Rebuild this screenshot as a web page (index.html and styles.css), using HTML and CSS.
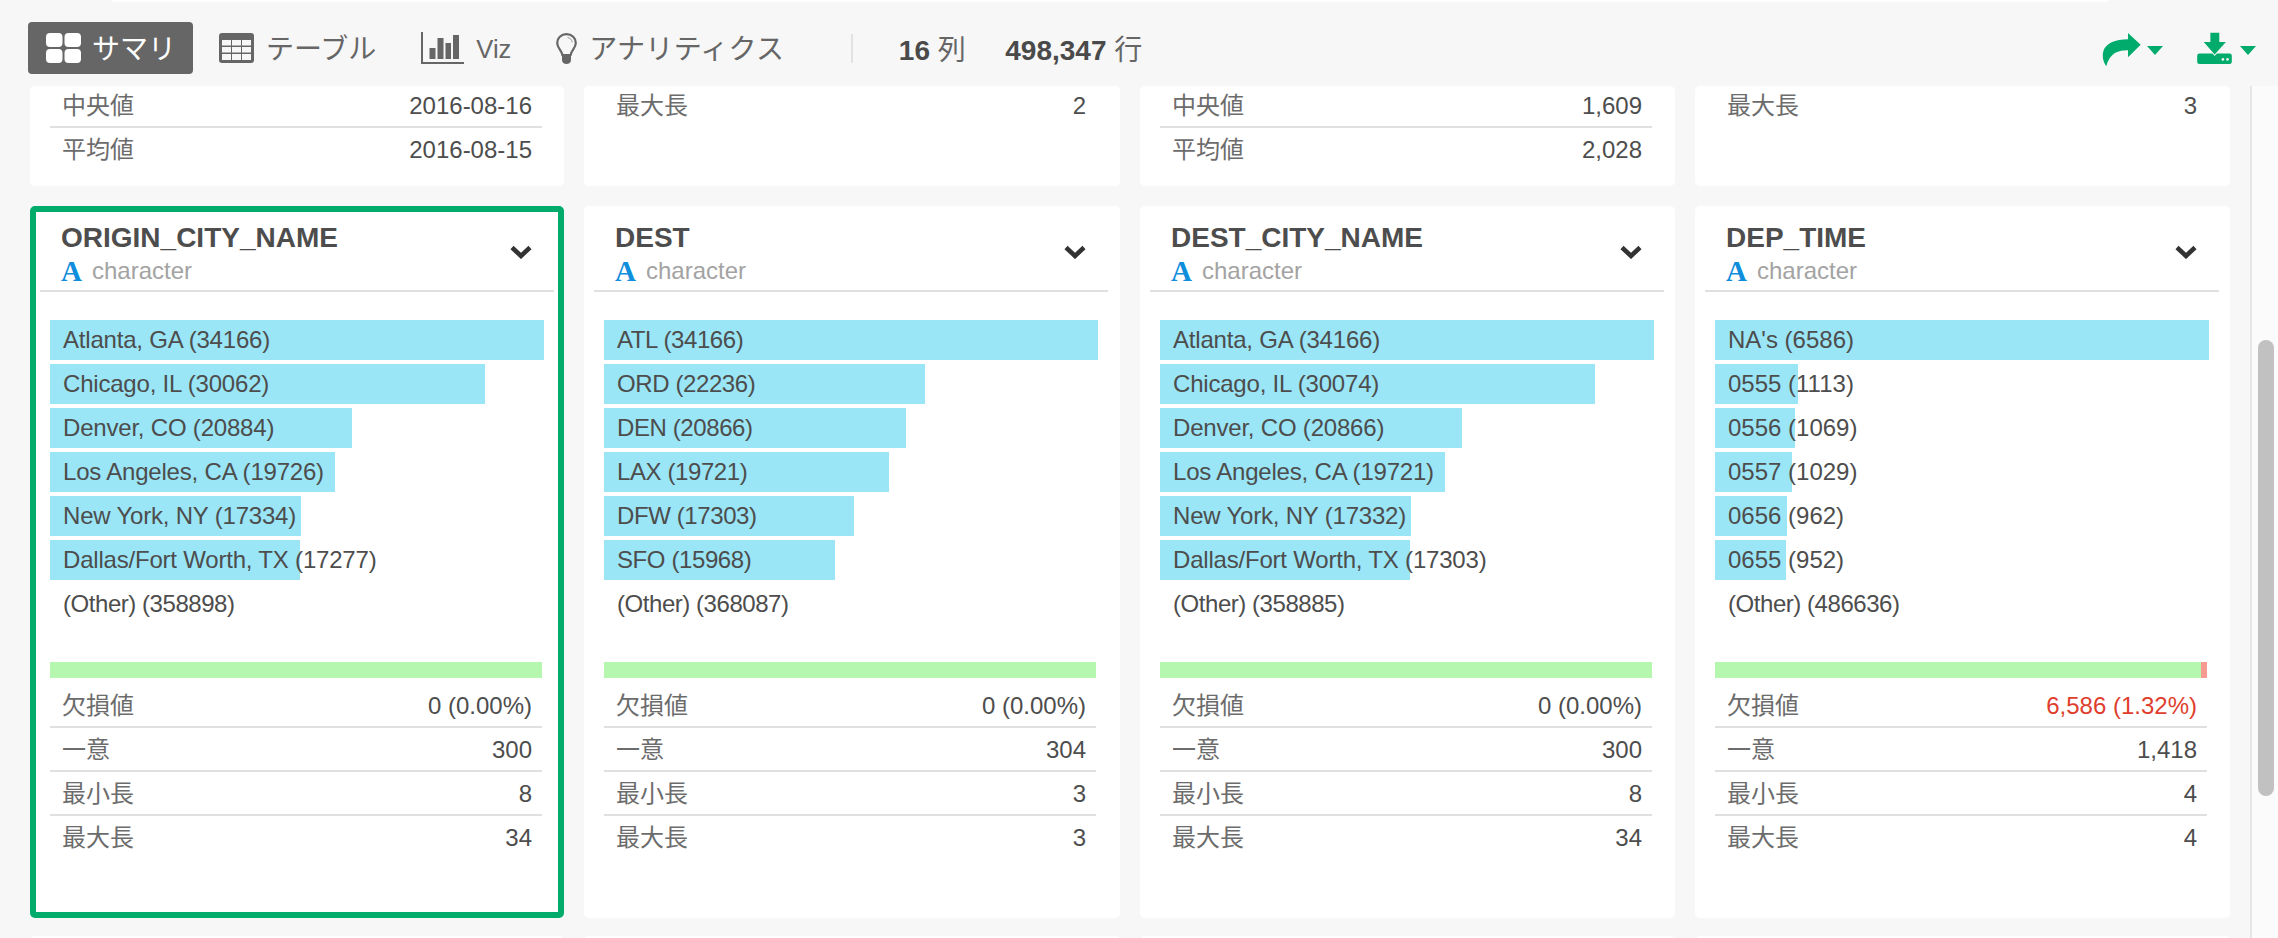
FILE: index.html
```html
<!DOCTYPE html>
<html>
	<head>
		<meta charset="utf-8">
		<title>サマリ</title>
		<link rel="stylesheet" href="styles.css">
	</head>
	<body>
		<div class="top-strip"></div>
		<div class="toolbar">
			<div class="nav-item active">
				<svg class="ico-summary" width="35" height="30" viewBox="0 0 35 30">
					<rect x="0" y="0" width="16.5" height="14" rx="4" fill="#fff"/>
					<rect x="18.5" y="0" width="16.5" height="14" rx="4" fill="#fff"/>
					<rect x="0" y="16" width="16.5" height="14" rx="4" fill="#fff"/>
					<rect x="18.5" y="16" width="16.5" height="14" rx="4" fill="#fff"/>
				</svg>
				<span class="kana">サマリ</span>
			</div>
			<div class="nav-item">
				<svg width="35" height="30" viewBox="0 0 35 30">
					<rect x="0" y="0" width="35" height="30" rx="3" fill="#666"/>
					<g fill="#f7f7f7">
						<rect x="3" y="7" width="9" height="5.5"/><rect x="13" y="7" width="9" height="5.5"/><rect x="23" y="7" width="9" height="5.5"/>
						<rect x="3" y="14" width="9" height="5.5"/><rect x="13" y="14" width="9" height="5.5"/><rect x="23" y="14" width="9" height="5.5"/>
						<rect x="3" y="21" width="9" height="6"/><rect x="13" y="21" width="9" height="6"/><rect x="23" y="21" width="9" height="6"/>
					</g>
				</svg>
				<span class="kana">テーブル</span>
			</div>
			<div class="nav-item">
				<svg width="43" height="32" viewBox="0 0 43 32">
					<path d="M1 0V31H43" fill="none" stroke="#666" stroke-width="2"/>
					<g fill="#666">
						<rect x="8.5" y="16" width="6" height="11"/>
						<rect x="16.5" y="6" width="6" height="21"/>
						<rect x="24.5" y="11" width="5.5" height="16"/>
						<rect x="32" y="3" width="6" height="24"/>
					</g>
				</svg>
				<span class="latin">Viz</span>
			</div>
			<div class="nav-item">
				<svg width="21" height="31" viewBox="0 0 21 31">
					<path d="M10.5 1.2C5 1.2 1.2 5.2 1.2 10C1.2 15 5.6 17 6.4 22H14.6C15.4 17 19.8 15 19.8 10C19.8 5.2 16 1.2 10.5 1.2Z" fill="none" stroke="#666" stroke-width="2.2"/>
					<path d="M11.5 4.5C14.2 4.8 16 6.8 16.2 9.5" fill="none" stroke="#999" stroke-width="1"/>
					<path d="M6 22H15V27C15 29.5 13 31 10.500 31C8 31 6 29.5 6 27Z" fill="#666"/>
				</svg>
				<span class="kana wide">アナリティクス</span>
			</div>
			<div class="counts">
				<b>16</b> 列<b class="rows">498,347</b> 行
			</div>
			<div class="tools">
				<svg class="ico-share" width="40" height="35" viewBox="0 0 120 105">
					<path d="M78 3L116 38L78 76V55C50 55 24 62 13 103C3 90 0 72 4 58C10 35 40 22 78 22Z" fill="#00ab6c"/>
				</svg>
				<i class="caret"></i>
				<svg class="ico-download" width="35" height="32" viewBox="0 0 105 97">
					<rect x="0" y="65" width="105" height="32" rx="7" fill="#00ab6c"/>
					<path d="M40 2H67V30H87L53 68L20 30H40Z" fill="#00ab6c" stroke="#f7f7f7" stroke-width="6" paint-order="stroke"/>
					<circle cx="78" cy="83" r="4" fill="#f7f7f7"/>
					<circle cx="92" cy="83" r="4" fill="#f7f7f7"/>
				</svg>
				<i class="caret"></i>
			</div>
		</div>
		<div class="main">
			<div class="content">
				<div class="grid">
					<!-- 上の行（途中で切れている） -->
					<div class="card card-top">
						<div class="stats">
							<div class="stat"><span class="label">中央値</span><span>2016-08-16</span></div>
							<div class="stat"><span class="label">平均値</span><span>2016-08-15</span></div>
						</div>
					</div>
					<div class="card card-top">
						<div class="stats">
							<div class="stat"><span class="label">最大長</span><span>2</span></div>
						</div>
					</div>
					<div class="card card-top">
						<div class="stats">
							<div class="stat"><span class="label">中央値</span><span>1,609</span></div>
							<div class="stat"><span class="label">平均値</span><span>2,028</span></div>
						</div>
					</div>
					<div class="card card-top">
						<div class="stats">
							<div class="stat"><span class="label">最大長</span><span>3</span></div>
						</div>
					</div>

					<!-- ORIGIN_CITY_NAME -->
					<div class="card selected">
						<div class="card-head">
							<div>
								<div class="col-name">ORIGIN_CITY_NAME</div>
								<div class="col-type"><span class="type-a">A</span>character</div>
							</div>
							<svg class="chevron" width="22" height="14" viewBox="0 0 22 14"><path d="M2 2.500L11 11L20 2.500" fill="none" stroke="#333" stroke-width="4.500"/></svg>
						</div>
						<div class="bars">
							<div class="bar"><div class="fill" style="width:100%"></div><div class="bar-text">Atlanta, GA (34166)</div></div>
							<div class="bar"><div class="fill" style="width:87.99%"></div><div class="bar-text">Chicago, IL (30062)</div></div>
							<div class="bar"><div class="fill" style="width:61.12%"></div><div class="bar-text">Denver, CO (20884)</div></div>
							<div class="bar"><div class="fill" style="width:57.74%"></div><div class="bar-text">Los Angeles, CA (19726)</div></div>
							<div class="bar"><div class="fill" style="width:50.74%"></div><div class="bar-text">New York, NY (17334)</div></div>
							<div class="bar"><div class="fill" style="width:50.57%"></div><div class="bar-text">Dallas/Fort Worth, TX (17277)</div></div>
							<div class="bar"><div class="bar-text other">(Other) (358898)</div></div>
						</div>
						<div class="missing"><div class="ok"></div></div>
						<div class="stats">
							<div class="stat"><span class="label">欠損値</span><span>0 (0.00%)</span></div>
							<div class="stat"><span class="label">一意</span><span>300</span></div>
							<div class="stat"><span class="label">最小長</span><span>8</span></div>
							<div class="stat"><span class="label">最大長</span><span>34</span></div>
						</div>
					</div>

					<!-- DEST -->
					<div class="card">
						<div class="card-head">
							<div>
								<div class="col-name">DEST</div>
								<div class="col-type"><span class="type-a">A</span>character</div>
							</div>
							<svg class="chevron" width="22" height="14" viewBox="0 0 22 14"><path d="M2 2.500L11 11L20 2.500" fill="none" stroke="#333" stroke-width="4.500"/></svg>
						</div>
						<div class="bars">
							<div class="bar"><div class="fill" style="width:100%"></div><div class="bar-text code">ATL (34166)</div></div>
							<div class="bar"><div class="fill" style="width:65.08%"></div><div class="bar-text code">ORD (22236)</div></div>
							<div class="bar"><div class="fill" style="width:61.07%"></div><div class="bar-text code">DEN (20866)</div></div>
							<div class="bar"><div class="fill" style="width:57.72%"></div><div class="bar-text code">LAX (19721)</div></div>
							<div class="bar"><div class="fill" style="width:50.64%"></div><div class="bar-text code">DFW (17303)</div></div>
							<div class="bar"><div class="fill" style="width:46.74%"></div><div class="bar-text code">SFO (15968)</div></div>
							<div class="bar"><div class="bar-text other">(Other) (368087)</div></div>
						</div>
						<div class="missing"><div class="ok"></div></div>
						<div class="stats">
							<div class="stat"><span class="label">欠損値</span><span>0 (0.00%)</span></div>
							<div class="stat"><span class="label">一意</span><span>304</span></div>
							<div class="stat"><span class="label">最小長</span><span>3</span></div>
							<div class="stat"><span class="label">最大長</span><span>3</span></div>
						</div>
					</div>

					<!-- DEST_CITY_NAME -->
					<div class="card">
						<div class="card-head">
							<div>
								<div class="col-name">DEST_CITY_NAME</div>
								<div class="col-type"><span class="type-a">A</span>character</div>
							</div>
							<svg class="chevron" width="22" height="14" viewBox="0 0 22 14"><path d="M2 2.500L11 11L20 2.500" fill="none" stroke="#333" stroke-width="4.500"/></svg>
						</div>
						<div class="bars">
							<div class="bar"><div class="fill" style="width:100%"></div><div class="bar-text">Atlanta, GA (34166)</div></div>
							<div class="bar"><div class="fill" style="width:88.02%"></div><div class="bar-text">Chicago, IL (30074)</div></div>
							<div class="bar"><div class="fill" style="width:61.07%"></div><div class="bar-text">Denver, CO (20866)</div></div>
							<div class="bar"><div class="fill" style="width:57.72%"></div><div class="bar-text">Los Angeles, CA (19721)</div></div>
							<div class="bar"><div class="fill" style="width:50.73%"></div><div class="bar-text">New York, NY (17332)</div></div>
							<div class="bar"><div class="fill" style="width:50.64%"></div><div class="bar-text">Dallas/Fort Worth, TX (17303)</div></div>
							<div class="bar"><div class="bar-text other">(Other) (358885)</div></div>
						</div>
						<div class="missing"><div class="ok"></div></div>
						<div class="stats">
							<div class="stat"><span class="label">欠損値</span><span>0 (0.00%)</span></div>
							<div class="stat"><span class="label">一意</span><span>300</span></div>
							<div class="stat"><span class="label">最小長</span><span>8</span></div>
							<div class="stat"><span class="label">最大長</span><span>34</span></div>
						</div>
					</div>

					<!-- DEP_TIME -->
					<div class="card">
						<div class="card-head">
							<div>
								<div class="col-name">DEP_TIME</div>
								<div class="col-type"><span class="type-a">A</span>character</div>
							</div>
							<svg class="chevron" width="22" height="14" viewBox="0 0 22 14"><path d="M2 2.500L11 11L20 2.500" fill="none" stroke="#333" stroke-width="4.500"/></svg>
						</div>
						<div class="bars">
							<div class="bar"><div class="fill" style="width:100%"></div><div class="bar-text digits">NA's (6586)</div></div>
							<div class="bar"><div class="fill" style="width:16.9%"></div><div class="bar-text digits">0555 (1113)</div></div>
							<div class="bar"><div class="fill" style="width:16.23%"></div><div class="bar-text digits">0556 (1069)</div></div>
							<div class="bar"><div class="fill" style="width:15.62%"></div><div class="bar-text digits">0557 (1029)</div></div>
							<div class="bar"><div class="fill" style="width:14.61%"></div><div class="bar-text digits">0656 (962)</div></div>
							<div class="bar"><div class="fill" style="width:14.45%"></div><div class="bar-text digits">0655 (952)</div></div>
							<div class="bar"><div class="bar-text other">(Other) (486636)</div></div>
						</div>
						<div class="missing"><div class="ok" style="width:98.68%"></div><div class="ng" style="width:1.32%"></div></div>
						<div class="stats">
							<div class="stat"><span class="label">欠損値</span><span class="red">6,586 (1.32%)</span></div>
							<div class="stat"><span class="label">一意</span><span>1,418</span></div>
							<div class="stat"><span class="label">最小長</span><span>4</span></div>
							<div class="stat"><span class="label">最大長</span><span>4</span></div>
						</div>
					</div>

					<!-- 次の行の上端だけ見えている -->
					<div class="card card-top"></div>
					<div class="card card-top"></div>
					<div class="card card-top"></div>
					<div class="card card-top"></div>
				</div>
			</div>
			<div class="track"><div class="thumb"></div></div>
		</div>
	</body>
</html>
```

FILE: styles.css
```css
*{margin: 0;padding: 0;box-sizing: border-box;}
html,body{height: 100%;overflow: hidden;}
body{
	background: #f7f7f7;
	color: #4d4d4d;
	font-family: "Liberation Sans","Noto Sans CJK JP",sans-serif;
	font-size: 24px;
}
.top-strip{height: 2px;margin: 0 170px 0 112px;background: #fff;}

/* toolbar */
.toolbar{
	display: flex;
	align-items: center;
	gap: 26px;
	height: 84px;
	padding: 8px 22px 0 28px;
}
.nav-item{
	display: flex;
	align-items: center;
	gap: 12px;
	height: 52px;
	padding-right: 19px;
	color: #666;
	font-size: 28px;
}
.nav-item.active{
	gap: 11px;
	padding: 0 17px 0 18px;
	background: #666;
	color: #fff;
	border-radius: 4px;
}
.nav-item .kana{margin-top: -3px;}
.nav-item .wide{letter-spacing: .3px;}
.nav-item .latin{margin-top: 2px;font-size: 25.500px;}
.counts{
	margin-left: 22px;
	padding-left: 45.500px;
	border-left: 2px solid #e2e2e2;
	height: 29px;
	line-height: 33px;
	color: #666;
	font-size: 28px;
	white-space: nowrap;
}
.counts b{color: #4a4a4a;}
.counts .rows{margin-left: 39.500px;}
.tools{
	margin-left: auto;
	display: flex;
	align-items: center;
}
.ico-share{margin-top: 3px;}
.ico-download{margin-left: 34px;}
.caret{
	margin: 4px 0 0 5px;
	width: 0;
	height: 0;
	border-left: 8px solid transparent;
	border-right: 8px solid transparent;
	border-top: 9px solid #00ab6c;
}
.ico-download + .caret{margin-left: 8px;}

/* main area */
.main{display: flex;height: 852px;}
.content{width: 2250px;padding-left: 30px;overflow: hidden;}
.grid{display: grid;grid-template-columns: 534px 536px 535px 535px;column-gap: 20px;}
.card{
	height: 712px;
	margin-bottom: 18px;
	padding: 15px 0 0 20px;
	background: #fff;
	border-radius: 5px;
}
.card-top{height: 100px;margin-bottom: 20px;padding-top: 0;overflow: hidden;}
.selected{box-shadow: inset 0 0 0 6px #00ab6c;}

.card-head{
	display: flex;
	justify-content: space-between;
	align-items: center;
	width: 514px;
	margin-left: -10px;
	padding: 0 22px 4px 21px;
	border-bottom: 2px solid #e0e0e0;
}
.chevron{margin-top: -3px;}
.col-name{height: 34px;line-height: 34px;font-size: 28px;font-weight: bold;}
.col-type{
	display: flex;
	gap: 10px;
	height: 31px;
	line-height: 32px;
	color: #a3a3a3;
}
.type-a{
	color: #0f8edb;
	font-family: "Liberation Serif",serif;
	font-weight: bold;
	font-size: 29px;
}

.bars{width: 494px;margin-top: 28px;}
.bar{
	display: grid;
	height: 40px;
	margin-bottom: 4px;
}
.fill{grid-area: 1/1;background: #9ae5f6;}
.bar-text{
	grid-area: 1/1;
	padding-left: 13px;
	line-height: 40px;
	letter-spacing: -.2px;
	white-space: nowrap;
}
.bar-text.code{letter-spacing: -.4px;}
.bar-text.digits{letter-spacing: 0;}
.bar-text.other{letter-spacing: -.45px;}

.missing{
	display: flex;
	width: 492px;
	height: 16px;
	margin-top: 38px;
	background: #b5f7ae;
}
.ok{width: 100%;background: #b5f7ae;}
.ng{background: #f79a91;}

.stats{width: 492px;margin-top: 6px;}
.card-top .stats{margin-top: -2px;}
.stat{
	display: flex;
	justify-content: space-between;
	align-items: baseline;
	height: 44px;
	padding: 2px 10px 0 12px;
	border-bottom: 2px solid #e0e0e0;
}
.stat:last-child{border-bottom: none;}
.label{color: #6c6c6c;}
.red{color: #e03e2d;}

/* scrollbar */
.track{flex: 1;border-left: 2px solid #e6e6e6;background: #fbfbfb;padding: 254px 4px 0 6px;}
.thumb{height: 456px;background: #c1c1c1;border-radius: 8px;}
```
